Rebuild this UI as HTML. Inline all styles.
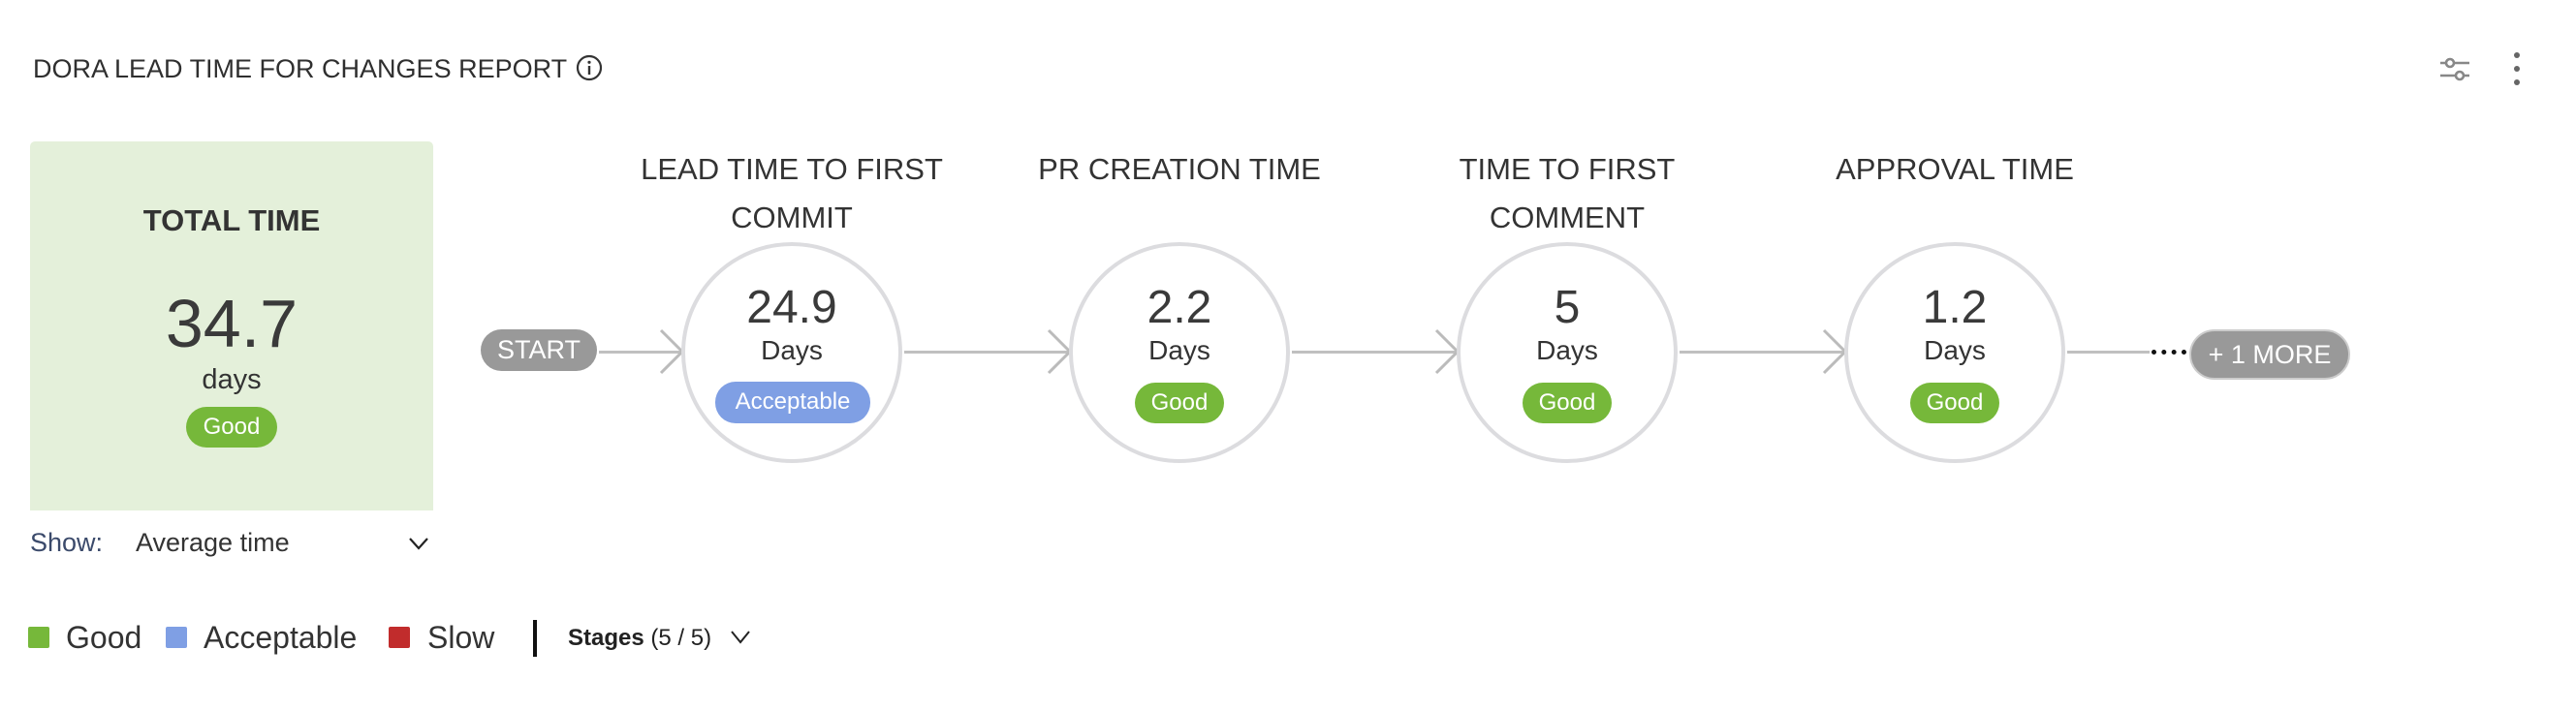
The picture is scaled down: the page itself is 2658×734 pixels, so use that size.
<!DOCTYPE html>
<html><head><meta charset="utf-8"><style>
*{margin:0;padding:0;box-sizing:border-box}
body{width:2658px;height:734px;background:#fff;font-family:"Liberation Sans",sans-serif;color:#333;position:relative;overflow:hidden}
.a{position:absolute}
.c{text-align:center;transform:translateX(-50%);white-space:nowrap}
.badge{position:absolute;height:42px;border-radius:21px;color:#fff;font-size:24px;line-height:42px;text-align:center;transform:translateX(-50%)}
.g{background:#76b83a}
.circle{position:absolute;width:228px;height:228px;border:4px solid #dcdcdf;border-radius:50%;top:250px;background:#fff}
.lbl{font-size:31px;line-height:50px;color:#333}
.val{font-size:48px;color:#3a3a3a}
.days{font-size:28px;color:#333}
.line{position:absolute;height:3px;background:#c0c0c0;top:362px}
</style></head><body>
<div class="a" style="left:34px;top:56px;font-size:27px;color:#2f2f2f">DORA LEAD TIME FOR CHANGES REPORT</div>
<svg class="a" style="left:594px;top:56px" width="28" height="28" viewBox="0 0 28 28"><circle cx="14" cy="14" r="12" fill="none" stroke="#333" stroke-width="2.2"/><rect x="12.8" y="12" width="2.4" height="9" fill="#333"/><circle cx="14" cy="8.3" r="1.6" fill="#333"/></svg>
<svg class="a" style="left:2516px;top:54px" width="34" height="34" viewBox="0 0 34 34" fill="none" stroke="#888" stroke-width="2.6"><line x1="2" y1="11" x2="32" y2="11"/><line x1="2" y1="24" x2="32" y2="24"/><circle cx="12" cy="11" r="4" fill="#fff"/><circle cx="22" cy="24" r="4" fill="#fff"/></svg>
<div class="a" style="left:2594px;top:54px;width:8px"><div style="width:6px;height:6px;border-radius:3px;background:#666;margin-bottom:8px"></div><div style="width:6px;height:6px;border-radius:3px;background:#666;margin-bottom:8px"></div><div style="width:6px;height:6px;border-radius:3px;background:#666"></div></div>

<div class="a" style="left:31px;top:146px;width:416px;height:381px;background:#e4f0da;border-radius:5px 5px 0 0"></div>
<div class="a c" style="left:239px;top:210px;font-size:31px;font-weight:bold;color:#333">TOTAL TIME</div>
<div class="a c" style="left:239px;top:294px;font-size:70px;color:#3a3a3a">34.7</div>
<div class="a c" style="left:239px;top:376px;font-size:29px">days</div>
<div class="badge g" style="left:239px;top:420px;width:94px">Good</div>

<div class="a" style="left:31px;top:545px;font-size:27px;color:#3b4a6b">Show:</div>
<div class="a" style="left:140px;top:545px;font-size:27px;color:#333">Average time</div>
<svg class="a" style="left:421px;top:553px" width="22" height="16" viewBox="0 0 22 16"><path d="M2 3 L11 13 L20 3" fill="none" stroke="#222" stroke-width="2.2"/></svg>

<div class="a" style="left:29px;top:647px;width:22px;height:22px;background:#76b83a;border-radius:2px"></div>
<div class="a" style="left:68px;top:640px;font-size:32px">Good</div>
<div class="a" style="left:171px;top:647px;width:22px;height:22px;background:#7f9fe4;border-radius:2px"></div>
<div class="a" style="left:210px;top:640px;font-size:32px">Acceptable</div>
<div class="a" style="left:401px;top:647px;width:22px;height:22px;background:#c12c2c;border-radius:2px"></div>
<div class="a" style="left:441px;top:640px;font-size:32px">Slow</div>
<div class="a" style="left:550px;top:640px;width:4px;height:38px;background:#111"></div>
<div class="a" style="left:586px;top:645px;font-size:24px;color:#222"><b>Stages</b> (5 / 5)</div>
<svg class="a" style="left:753px;top:650px" width="22" height="16" viewBox="0 0 22 16"><path d="M2 2 L11 13 L20 2" fill="none" stroke="#222" stroke-width="2"/></svg>

<div class="a" style="left:496px;top:340px;width:120px;height:43px;border-radius:22px;background:#999;color:#fff;font-size:27px;line-height:43px;text-align:center">START</div>

<div class="line" style="left:618px;width:86px"></div>
<div class="line" style="left:933px;width:170px"></div>
<div class="line" style="left:1333px;width:170px"></div>
<div class="line" style="left:1733px;width:170px"></div>
<div class="line" style="left:2133px;width:85px"></div>
<div class="a" style="left:2220px;top:361px;width:36px;height:0;border-top:5px dotted #111"></div>
<svg class="a" style="left:0;top:0" width="2658" height="734"><g fill="none" stroke="#bbb" stroke-width="3"><path d="M682 341 L704 363 L682 385"/><path d="M1082 341 L1104 363 L1082 385"/><path d="M1482 341 L1504 363 L1482 385"/><path d="M1882 341 L1904 363 L1882 385"/></g></svg>

<div class="circle" style="left:703px"></div>
<div class="circle" style="left:1103px"></div>
<div class="circle" style="left:1503px"></div>
<div class="circle" style="left:1903px"></div>

<div class="a c lbl" style="left:817px;top:150px">LEAD TIME TO FIRST<br>COMMIT</div>
<div class="a c lbl" style="left:1217px;top:150px">PR CREATION TIME</div>
<div class="a c lbl" style="left:1617px;top:150px">TIME TO FIRST<br>COMMENT</div>
<div class="a c lbl" style="left:2017px;top:150px">APPROVAL TIME</div>

<div class="a c val" style="left:817px;top:290px">24.9</div>
<div class="a c val" style="left:1217px;top:290px">2.2</div>
<div class="a c val" style="left:1617px;top:290px">5</div>
<div class="a c val" style="left:2017px;top:290px">1.2</div>
<div class="a c days" style="left:817px;top:346px">Days</div>
<div class="a c days" style="left:1217px;top:346px">Days</div>
<div class="a c days" style="left:1617px;top:346px">Days</div>
<div class="a c days" style="left:2017px;top:346px">Days</div>
<div class="badge" style="left:818px;top:394px;width:160px;height:43px;background:#7f9fe4">Acceptable</div>
<div class="badge g" style="left:1217px;top:395px;width:92px">Good</div>
<div class="badge g" style="left:1617px;top:395px;width:92px">Good</div>
<div class="badge g" style="left:2017px;top:395px;width:92px">Good</div>

<div class="a" style="left:2259px;top:340px;width:166px;height:52px;border-radius:26px;background:#999;border:2px solid #ccc;color:#fff;font-size:27px;line-height:48px;text-align:center">+ 1 MORE</div>
</body></html>
